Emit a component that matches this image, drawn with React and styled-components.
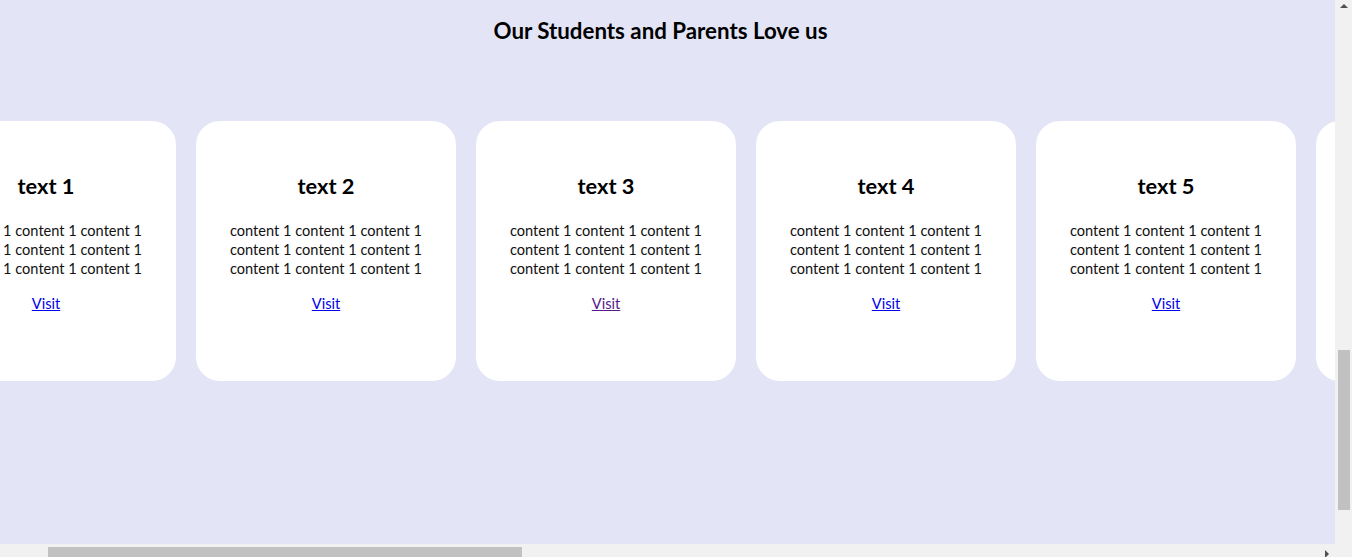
import React from 'react'
import styled, { createGlobalStyle } from 'styled-components'

const GlobalStyle = createGlobalStyle`
	html, body {margin: 0; padding: 0; overflow: hidden;}
	body {font-family: Lato, "Open Sans", sans-serif; background: #f1f1f1;}
	* {box-sizing: border-box;}
`

const cards = [1, 2, 3, 4, 5, 6]

function App() {
	return (
		<>
			<GlobalStyle />
			<Frame>
				<Viewport>
					<Heading>Our Students and Parents Love us</Heading>
					<Track>
						{cards.map((n) => (
							<Card key={n}>
								<CardTitle>text {n}</CardTitle>
								<CardText>
									content 1 content 1 content 1<br />
									content 1 content 1 content 1<br />
									content 1 content 1 content 1
								</CardText>
								<VisitLink href="#" $visited={n === 3}>Visit</VisitLink>
							</Card>
						))}
					</Track>
				</Viewport>
				<VScroll>
					<ArrowUp />
					<VThumb />
				</VScroll>
				<HScroll>
					<HThumb />
					<ArrowRight />
				</HScroll>
				<Corner />
			</Frame>
		</>
	)
}

const Frame = styled.div`
	width: 1352px; height: 557px; display: grid; grid-template-columns: 1335px 17px; grid-template-rows: 544px 13px; overflow: hidden;
`
const Viewport = styled.div`
	background: #e3e4f6; overflow: hidden; display: flex; flex-direction: column;
`
const Heading = styled.h2`
	margin: 17px 14px 0 0; text-align: center; font-size: 22.3px; font-weight: 700; color: #000; line-height: 28px;
`
const Track = styled.div`
	display: flex; gap: 20px; margin: 76px 0 0 -84px;
`
const Card = styled.div`
	flex: 0 0 260px; height: 260px; background: #fff; border-radius: 24px; display: flex; flex-direction: column; align-items: center; padding-top: 51px;
`
const CardTitle = styled.h3`
	margin: 0; font-size: 21.8px; font-weight: 700; color: #000; line-height: 28px;
`
const CardText = styled.p`
	margin: 21px 0 0; font-size: 14.6px; line-height: 19px; color: #111; text-align: center; white-space: nowrap;
`
const VisitLink = styled.a`
	margin-top: 16px; font-size: 14.6px; line-height: 19px; color: ${(p) => (p.$visited ? '#551a8b' : '#0000ee')}; text-decoration: underline;
`
const VScroll = styled.div`
	grid-row: 1; grid-column: 2; background: #f1f1f1; display: flex; flex-direction: column; align-items: center; padding-top: 4px;
`
const ArrowUp = styled.div`
	width: 0; height: 0; border-left: 4px solid transparent; border-right: 4px solid transparent; border-bottom: 4px solid #505050;
`
const VThumb = styled.div`
	width: 12px; height: 160px; background: #c1c1c1; margin-top: 342px;
`
const HScroll = styled.div`
	grid-row: 2; grid-column: 1; background: #f1f1f1; display: flex; align-items: flex-end; padding-left: 48px; padding-right: 6px;
`
const HThumb = styled.div`
	width: 474px; height: 10px; background: #c1c1c1;
`
const ArrowRight = styled.div`
	margin-left: auto; align-self: center; margin-top: 6px; width: 0; height: 0; border-top: 4px solid transparent; border-bottom: 4px solid transparent; border-left: 4px solid #505050;
`
const Corner = styled.div`
	grid-row: 2; grid-column: 2; background: #f1f1f1;
`

export default App
